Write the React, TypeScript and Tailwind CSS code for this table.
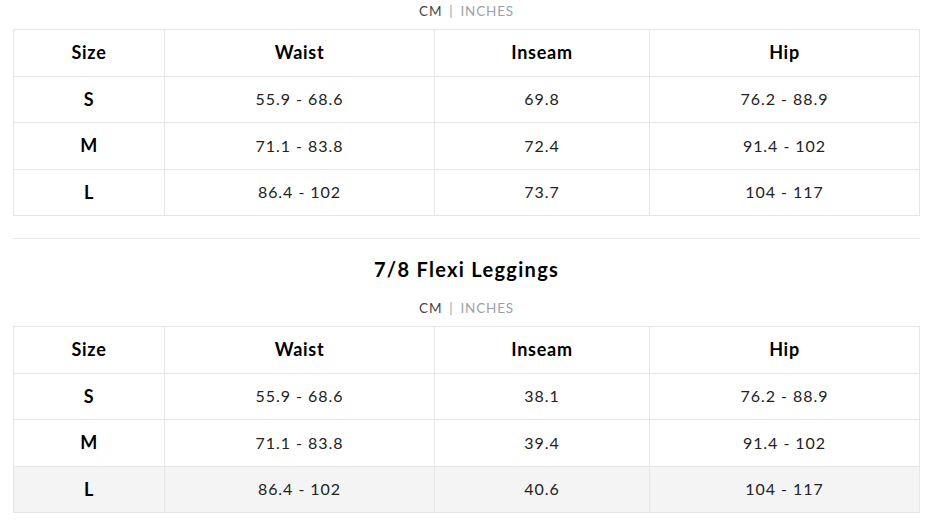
import React from 'react'

type Row = { size: string; waist: string; inseam: string; hip: string }

const firstRows: Row[] = [
  { size: 'S', waist: '55.9 - 68.6', inseam: '69.8', hip: '76.2 - 88.9' },
  { size: 'M', waist: '71.1 - 83.8', inseam: '72.4', hip: '91.4 - 102' },
  { size: 'L', waist: '86.4 - 102', inseam: '73.7', hip: '104 - 117' },
]

const flexiRows: Row[] = [
  { size: 'S', waist: '55.9 - 68.6', inseam: '38.1', hip: '76.2 - 88.9' },
  { size: 'M', waist: '71.1 - 83.8', inseam: '39.4', hip: '91.4 - 102' },
  { size: 'L', waist: '86.4 - 102', inseam: '40.6', hip: '104 - 117' },
]

function UnitToggle() {
  return (
    <div className="text-center text-[13.5px] leading-[16px] tracking-[0.06em]">
      <span className="text-[#444]">CM</span>
      <span className="text-[#9aa0a6] mx-[7px]">|</span>
      <span className="text-[#9aa3ab]">INCHES</span>
    </div>
  )
}

function SizeTable({ rows, highlightLast }: { rows: Row[]; highlightLast?: boolean }) {
  const cell = 'border border-[#e6e6e6] h-[46.5px] p-0 text-center align-middle'
  const head = `${cell} text-[18px] font-bold text-black tracking-[0.04em]`
  const data = `${cell} text-[16px] text-[#222] tracking-[0.06em]`
  return (
    <table className="w-full border-collapse table-fixed">
      <colgroup>
        <col className="w-[151px]" />
        <col className="w-[270px]" />
        <col className="w-[215px]" />
        <col className="w-[270px]" />
      </colgroup>
      <thead>
        <tr>
          <th className={head}>Size</th>
          <th className={head}>Waist</th>
          <th className={head}>Inseam</th>
          <th className={head}>Hip</th>
        </tr>
      </thead>
      <tbody>
        {rows.map((r, i) => (
          <tr key={r.size} className={highlightLast && i === rows.length - 1 ? 'bg-[#f4f4f4]' : ''}>
            <td className={head}>{r.size}</td>
            <td className={data}>{r.waist}</td>
            <td className={data}>{r.inseam}</td>
            <td className={data}>{r.hip}</td>
          </tr>
        ))}
      </tbody>
    </table>
  )
}

export default function App() {
  return (
    <div className="w-[933px] h-[523px] overflow-hidden bg-white px-[13px] pt-[3px] font-['Lato',sans-serif]">
      <UnitToggle />
      <div className="mt-[10px]">
        <SizeTable rows={firstRows} />
      </div>

      <div className="mt-[22px] border-t border-[#e6e6e6]" />

      <h2 className="mt-[18px] text-center text-[20px] leading-[24px] font-bold text-black tracking-[0.065em]">
        7/8 Flexi Leggings
      </h2>
      <div className="mt-[19px]">
        <UnitToggle />
      </div>
      <div className="mt-[10px]">
        <SizeTable rows={flexiRows} highlightLast />
      </div>
    </div>
  )
}
